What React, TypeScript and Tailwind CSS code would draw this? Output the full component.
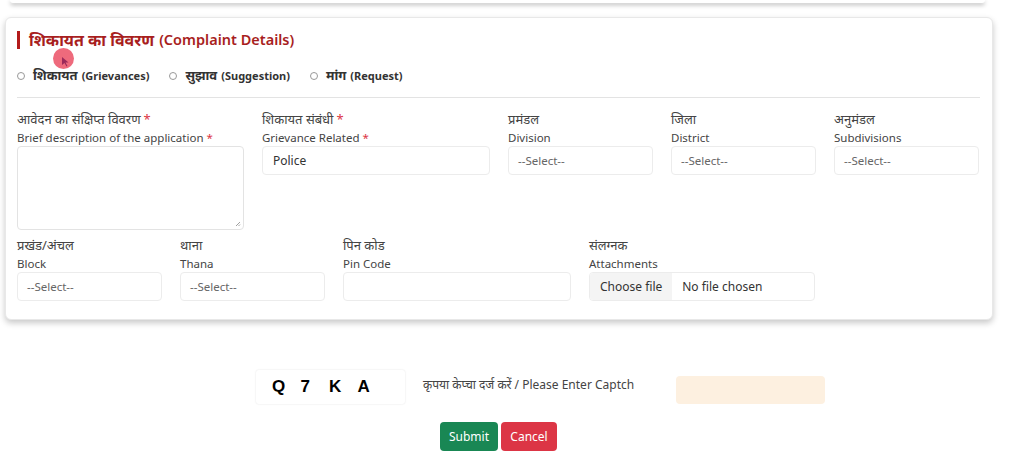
import React from "react";

const font = { fontFamily: '"Noto Sans", "Open Sans", sans-serif' };

function Label({ hi, en, req }: { hi: string; en: string; req?: boolean }) {
  return (
    <div className="text-[#444]">
      <div className="text-[13px] leading-[19px] h-[19px]">
        {hi}
        {req && <span className="text-[#dc3545] ml-[3px]">*</span>}
      </div>
      <div className="text-[11.5px] leading-[17px] h-[17px]">
        {en}
        {req && <span className="text-[#dc3545] ml-[3px]">*</span>}
      </div>
    </div>
  );
}

function Select({ text }: { text?: string }) {
  return (
    <div className="h-[29px] rounded-[4px] border border-[#ececec] bg-white flex items-center px-[9px] text-[11.5px] text-[#666]">
      {text}
    </div>
  );
}

function Radio({ hi, en }: { hi: string; en: string }) {
  return (
    <div className="flex items-center">
      <span className="w-[8px] h-[8px] rounded-full border border-[#999] bg-white mr-[8px]" />
      <span className="text-[13px] font-bold text-[#333]">{hi}</span>
      <span className="text-[11px] font-bold text-[#333] ml-[4px]">{en}</span>
    </div>
  );
}

export default function App() {
  return (
    <div className="relative w-[1024px] h-[468px] bg-white overflow-hidden" style={font}>
      <div className="ml-[10px] w-[975px] h-[3px] bg-white rounded-b-[4px] shadow-[0_2px_4px_rgba(0,0,0,0.3)]" />
      <div className="mt-[14px] ml-[5px] w-[988px] h-[303px] rounded-[6px] border border-[#e8e8e8] bg-white shadow-[0_3px_6px_rgba(0,0,0,0.22)] px-[11px] pt-[12px]">
        <div className="flex items-center h-[20px]">
          <span className="w-[3px] h-[18px] bg-[#b31b1b]" />
          <span className="ml-[9px] text-[16px] font-bold text-[#a81e1e]">शिकायत का विवरण</span>
          <span className="ml-[5px] text-[14.5px] font-semibold text-[#a81e1e]">(Complaint Details)</span>
        </div>
        <div className="flex items-center gap-[20px] mt-[16px] h-[20px]">
          <Radio hi="शिकायत" en="(Grievances)" />
          <Radio hi="सुझाव" en="(Suggestion)" />
          <Radio hi="मांग" en="(Request)" />
        </div>
        <div className="mt-[11px] w-[963px] h-px bg-[#e3e3e3]" />
        <div className="mt-[12px] grid grid-cols-[227px_228px_145px_145px_145px] gap-x-[18px]">
          <div>
            <Label hi="आवेदन का संक्षिप्त विवरण" en="Brief description of the application" req />
            <div className="relative h-[84px] rounded-[4px] border border-[#e3e3e3] bg-white">
              <svg className="absolute right-[2px] bottom-[2px]" width="6" height="6" viewBox="0 0 6 6">
                <path d="M5 1 L1 5 M5 3.5 L3.5 5" stroke="#888" strokeWidth="0.8" />
              </svg>
            </div>
          </div>
          <div>
            <Label hi="शिकायत संबंधी" en="Grievance Related" req />
            <div className="h-[29px] rounded-[4px] border border-[#ececec] bg-white flex items-center px-[10px] text-[12px] text-[#333]">
              Police
            </div>
          </div>
          <div>
            <Label hi="प्रमंडल" en="Division" />
            <Select text="--Select--" />
          </div>
          <div>
            <Label hi="जिला" en="District" />
            <Select text="--Select--" />
          </div>
          <div>
            <Label hi="अनुमंडल" en="Subdivisions" />
            <Select text="--Select--" />
          </div>
        </div>
        <div className="mt-[6px] grid grid-cols-[145px_145px_228px_226px] gap-x-[18px]">
          <div>
            <Label hi="प्रखंड/अंचल" en="Block" />
            <Select text="--Select--" />
          </div>
          <div>
            <Label hi="थाना" en="Thana" />
            <Select text="--Select--" />
          </div>
          <div>
            <Label hi="पिन कोड" en="Pin Code" />
            <Select />
          </div>
          <div>
            <Label hi="संलग्नक" en="Attachments" />
            <div className="h-[29px] rounded-[4px] border border-[#ececec] bg-white flex items-center text-[12px] text-[#333]">
              <span className="h-full flex items-center px-[10px] bg-[#f4f4f4] rounded-l-[4px]">Choose file</span>
              <span className="ml-[10px]">No file chosen</span>
            </div>
          </div>
        </div>
      </div>

      <div className="mt-[49px] flex items-center pl-[256px]">
        <div className="w-[149px] h-[34px] rounded-[3px] bg-white shadow-[0_0_2px_rgba(0,0,0,0.12)] flex items-center pl-[16px] text-[17px] font-black text-black" style={{ fontFamily: '"Liberation Sans", Arial, sans-serif' }}>
          <span className="w-[28.5px]">Q</span>
          <span className="w-[28.5px]">7</span>
          <span className="w-[28.5px]">K</span>
          <span className="w-[28.5px]">A</span>
        </div>
        <div className="ml-[18px] text-[12px] text-[#444] -mt-[4px]">कृपया केप्चा दर्ज करें / Please Enter Captch</div>
        <div className="ml-[42px] mt-[7px] w-[149px] h-[28px] rounded-[4px] bg-[#fdf0e0]" />
      </div>
      <div className="mt-[18px] flex pl-[440px] gap-[3px]">
        <button className="h-[29px] w-[58px] rounded-[4px] bg-[#198754] text-white text-[12px]">Submit</button>
        <button className="h-[29px] w-[56px] rounded-[4px] bg-[#dc3545] text-white text-[12px]">Cancel</button>
      </div>

      <div className="absolute left-[53px] top-[48px] w-[21px] h-[21px] rounded-full bg-[#ec5a6e] opacity-90" />
      <svg className="absolute left-[62px] top-[57px]" width="8" height="10" viewBox="0 0 8 10">
        <path d="M0 0 L0 8 L2.5 6 L4.5 9.5 L5.5 9 L3.5 5.5 L6.5 5.5 Z" fill="#9b2a5a" />
      </svg>
    </div>
  );
}
